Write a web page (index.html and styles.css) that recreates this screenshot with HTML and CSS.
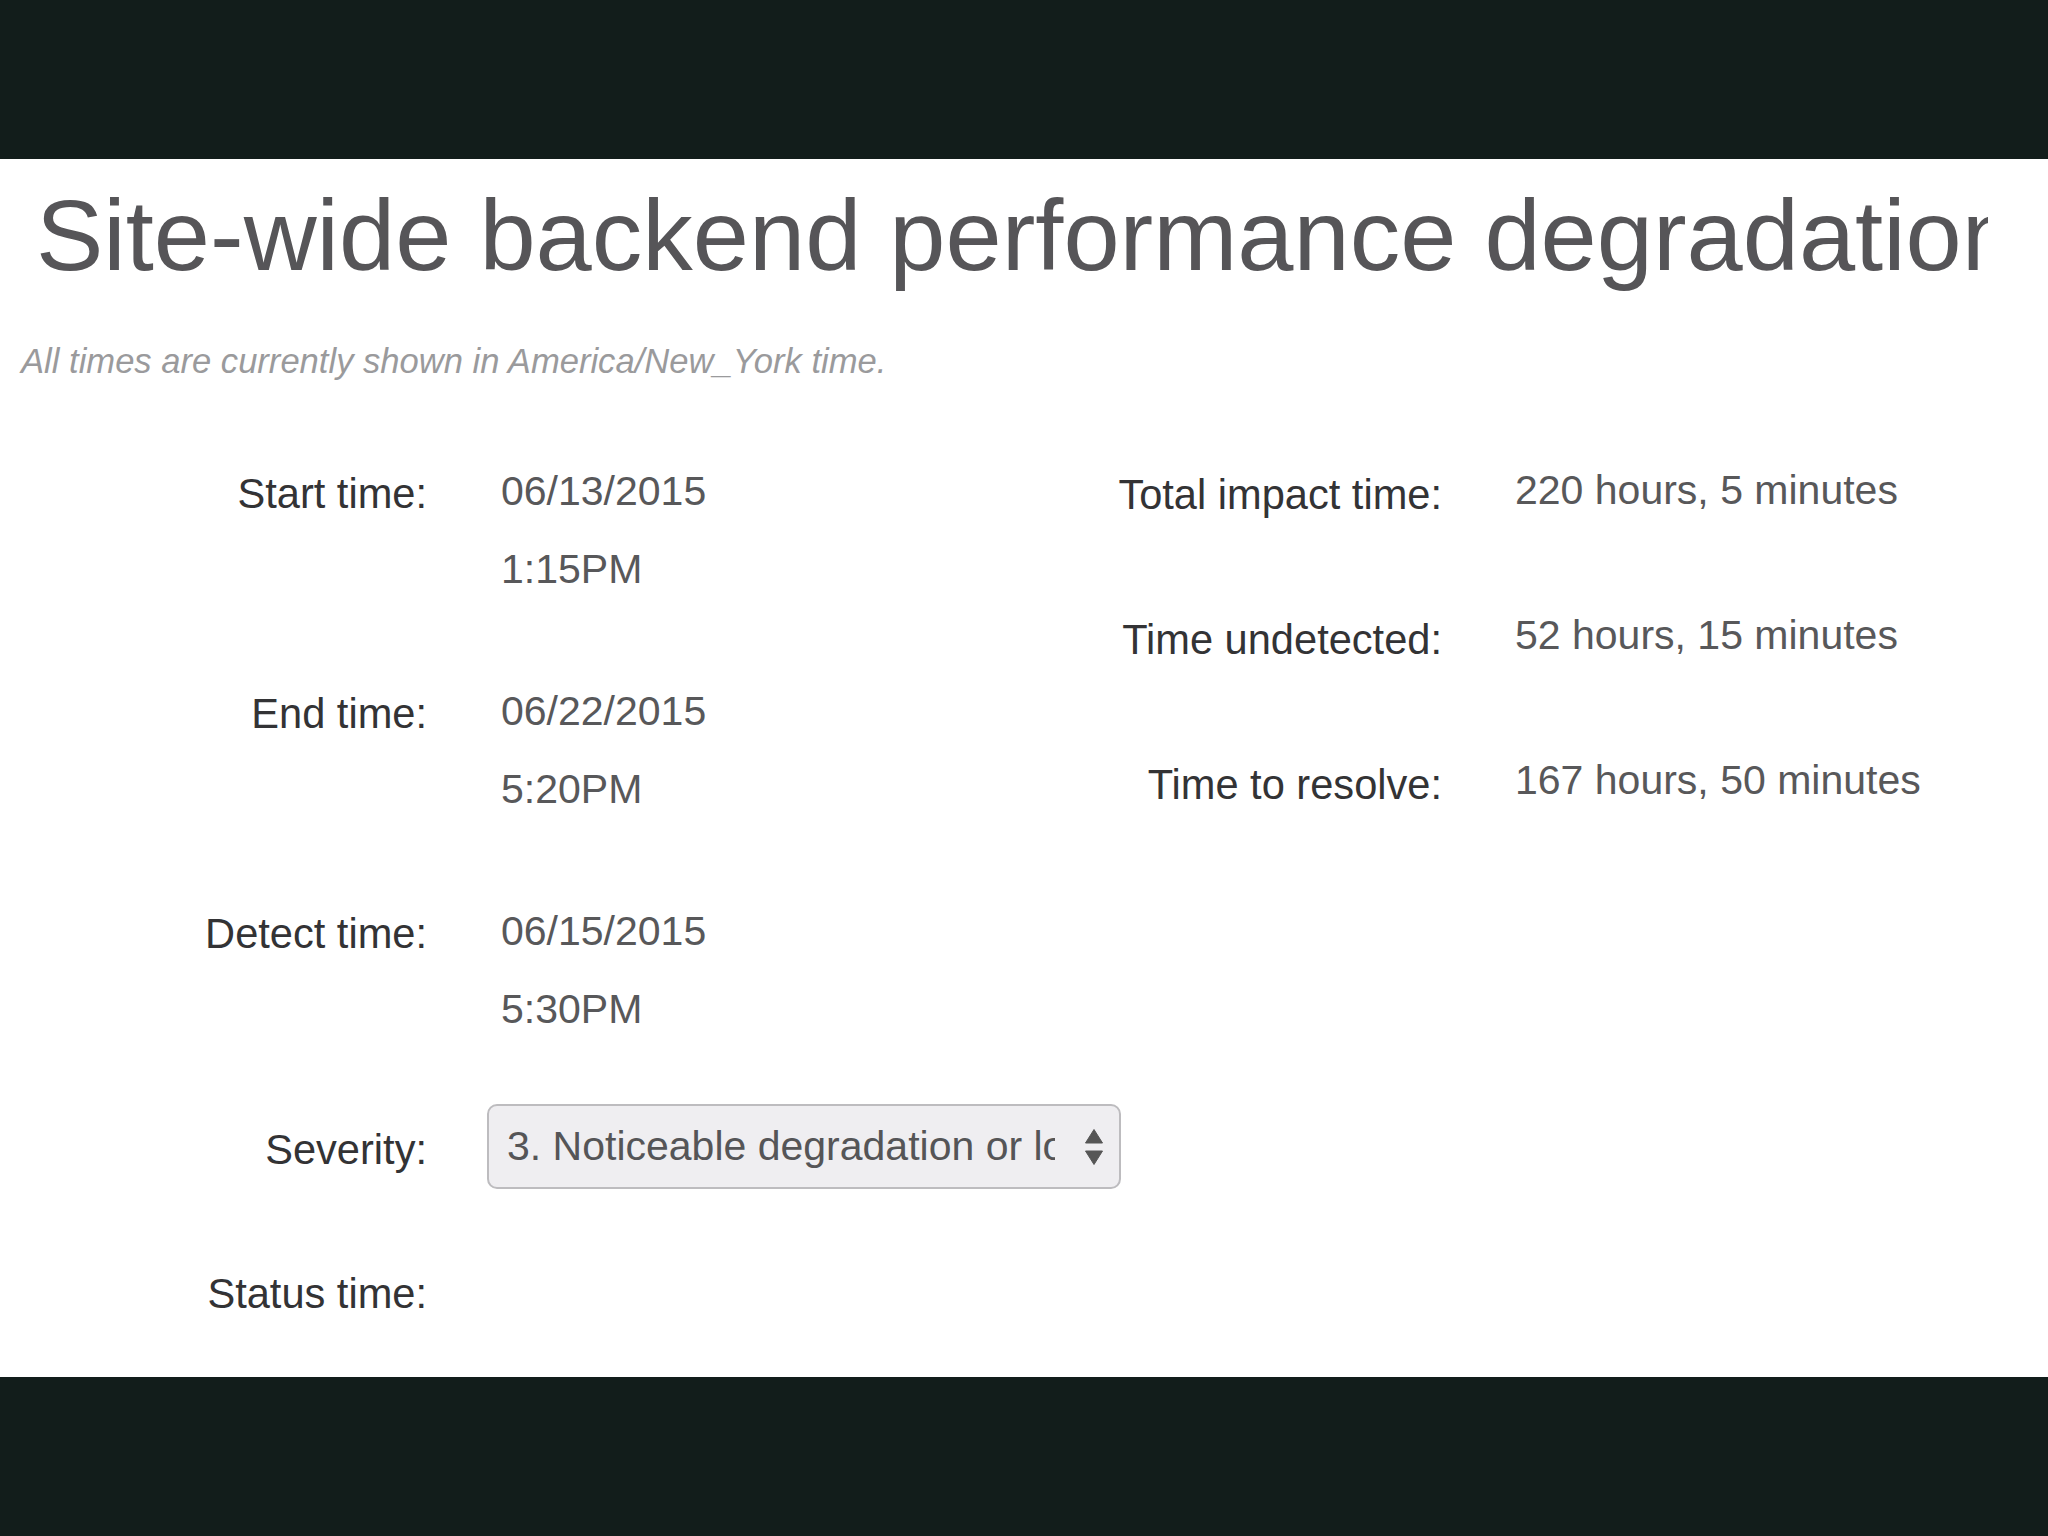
FILE: index.html
```html
<!DOCTYPE html>
<html lang="en">
<head>
<meta charset="utf-8">
<title>Site-wide backend performance degradation</title>
<link rel="stylesheet" href="styles.css">
</head>
<body>
<div class="bar"></div>
<main class="main">
  <h1 class="title">Site-wide backend performance degradation</h1>
  <p class="tz">All times are currently shown in America/New_York time.</p>
  <div class="form">
    <div class="times">
      <div class="row">
        <div class="label">Start time:</div>
        <div class="value"><div>06/13/2015</div><div>1:15PM</div></div>
      </div>
      <div class="row">
        <div class="label">End time:</div>
        <div class="value"><div>06/22/2015</div><div>5:20PM</div></div>
      </div>
      <div class="row">
        <div class="label">Detect time:</div>
        <div class="value"><div>06/15/2015</div><div>5:30PM</div></div>
      </div>
      <div class="row row-severity">
        <div class="label label-select">Severity:</div>
        <div class="value">
          <div class="select">
            <span class="select-text">3. Noticeable degradation or loss of functionality</span>
            <svg class="select-arrows" width="18" height="36" viewBox="0 0 18 36" aria-hidden="true">
              <path d="M9 0.5 L17.5 14 L0.5 14 Z" fill="#565656" stroke="#565656" stroke-linejoin="round" stroke-width="1"/>
              <path d="M0.5 22 L17.5 22 L9 35.5 Z" fill="#565656" stroke="#565656" stroke-linejoin="round" stroke-width="1"/>
            </svg>
          </div>
        </div>
      </div>
      <div class="row row-status">
        <div class="label">Status time:</div>
        <div class="value"></div>
      </div>
    </div>
    <div class="summary">
      <div class="row">
        <div class="label">Total impact time:</div>
        <div class="value">220 hours, 5 minutes</div>
      </div>
      <div class="row">
        <div class="label">Time undetected:</div>
        <div class="value">52 hours, 15 minutes</div>
      </div>
      <div class="row">
        <div class="label">Time to resolve:</div>
        <div class="value">167 hours, 50 minutes</div>
      </div>
    </div>
  </div>
</main>
<div class="bar"></div>
</body>
</html>
```
FILE: styles.css
```css
html, body {
  margin: 0;
  padding: 0;
  background: #ffffff;
}

body {
  font-family: "Liberation Sans", Arial, sans-serif;
  width: 2048px;
  height: 1536px;
  overflow: hidden;
}

.bar {
  height: 159px;
  background: #121d1b;
}

.main {
  height: 1218px;
  overflow: hidden;
  background: #ffffff;
}

.title {
  box-sizing: border-box;
  width: 1988px;
  margin: 0;
  padding: 16px 0 0 36px;
  font-size: 101px;
  line-height: 120px;
  font-weight: normal;
  color: #565558;
  white-space: nowrap;
  overflow: hidden;
}

.tz {
  margin: 46px 0 0 21px;
  font-size: 34.6px;
  line-height: 40px;
  font-style: italic;
  color: #9a9a9c;
}

.form {
  display: flex;
  margin-top: 71px;
}

.times {
  width: 1100px;
  display: flex;
  flex-direction: column;
  gap: 64px;
}

.summary {
  display: flex;
  flex-direction: column;
  gap: 65px;
}

.row {
  display: grid;
  column-gap: 74px;
  font-size: 41px;
  line-height: 78px;
}

.times .row {
  grid-template-columns: 427px 1fr;
}

.summary .row {
  grid-template-columns: 342px 1fr;
  column-gap: 73px;
  line-height: 80px;
}

.label {
  text-align: right;
  color: #333335;
  font-size: 41.6px;
  padding-top: 3px;
  margin-bottom: -3px;
  white-space: nowrap;
}

.value {
  color: #58585a;
  white-space: nowrap;
}

.summary .value {
  margin-top: -2px;
}

.row-severity {
  margin-top: -8px;
}

.label-select {
  line-height: 85px;
}

.row-status {
  margin-top: -2px;
}

.row-status .label {
  line-height: 80px;
}

.select {
  box-sizing: border-box;
  display: flex;
  align-items: center;
  width: 634px;
  height: 85px;
  margin-left: -14px;
  padding-left: 18px;
  border: 2px solid #bdbcbf;
  border-radius: 10px;
  background: #efeef1;
}

.select-text {
  width: 548px;
  overflow: hidden;
  white-space: nowrap;
  line-height: 81px;
  color: #555557;
}

.select-arrows {
  margin-left: 30px;
  flex: none;
}
```
